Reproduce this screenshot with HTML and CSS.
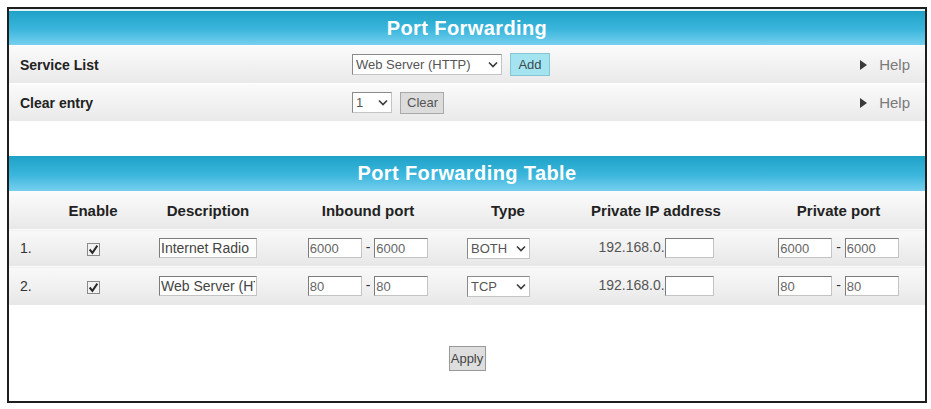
FILE: index.html
```html
<!DOCTYPE html>
<html lang="en">
<head>
    <meta charset="UTF-8">
    <title>Port Forwarding</title>
    <link rel="stylesheet" href="styles.css">
</head>
<body>
    <div class="panel">
        <div class="bar bar-top">Port Forwarding</div>

        <div class="opt-row">
            <div class="opt-label">Service List</div>
            <div class="opt-ctrl">
                <span class="sel-wrap sel-service">
                    <select><option>Web Server (HTTP)</option></select>
                    <svg class="chev" viewBox="0 0 10 6"><path d="M1 1l4 4 4-4"/></svg>
                </span>
                <button class="btn btn-add">Add</button>
            </div>
            <a class="help" href="#"><span class="tri"></span>Help</a>
        </div>

        <div class="opt-row">
            <div class="opt-label">Clear entry</div>
            <div class="opt-ctrl">
                <span class="sel-wrap sel-entry">
                    <select><option>1</option><option>2</option></select>
                    <svg class="chev" viewBox="0 0 10 6"><path d="M1 1l4 4 4-4"/></svg>
                </span>
                <button class="btn btn-clear">Clear</button>
            </div>
            <a class="help" href="#"><span class="tri"></span>Help</a>
        </div>

        <div class="spacer"></div>

        <div class="bar">Port Forwarding Table</div>

        <table class="pf-table">
            <colgroup>
                <col style="width:41px">
                <col style="width:86px">
                <col style="width:144px">
                <col style="width:176px">
                <col style="width:104px">
                <col style="width:192px">
                <col style="width:173px">
            </colgroup>
            <thead>
                <tr>
                    <th></th>
                    <th>Enable</th>
                    <th>Description</th>
                    <th>Inbound port</th>
                    <th>Type</th>
                    <th>Private IP address</th>
                    <th>Private port</th>
                </tr>
            </thead>
            <tbody>
                <tr class="row-1">
                    <td class="num">1.</td>
                    <td class="center"><span class="check"><svg viewBox="0 0 10 10"><path d="M1.5 5l2.5 3 4.5-6.5"/></svg></span></td>
                    <td class="center"><input class="txt desc" type="text" value="Internet Radio"></td>
                    <td class="center"><input class="txt port" type="text" value="6000"> - <input class="txt port" type="text" value="6000"></td>
                    <td class="type">
                        <span class="sel-wrap sel-type">
                            <select><option>BOTH</option><option>TCP</option><option>UDP</option></select>
                            <svg class="chev" viewBox="0 0 10 6"><path d="M1 1l4 4 4-4"/></svg>
                        </span>
                    </td>
                    <td class="center ip">192.168.0.<input class="txt host" type="text" value=""></td>
                    <td class="center"><input class="txt port" type="text" value="6000"> - <input class="txt port" type="text" value="6000"></td>
                </tr>
                <tr class="row-2">
                    <td class="num">2.</td>
                    <td class="center"><span class="check"><svg viewBox="0 0 10 10"><path d="M1.5 5l2.5 3 4.5-6.5"/></svg></span></td>
                    <td class="center"><input class="txt desc" type="text" value="Web Server (HTTP)"></td>
                    <td class="center"><input class="txt port" type="text" value="80"> - <input class="txt port" type="text" value="80"></td>
                    <td class="type">
                        <span class="sel-wrap sel-type">
                            <select><option>TCP</option><option>BOTH</option><option>UDP</option></select>
                            <svg class="chev" viewBox="0 0 10 6"><path d="M1 1l4 4 4-4"/></svg>
                        </span>
                    </td>
                    <td class="center ip">192.168.0.<input class="txt host" type="text" value=""></td>
                    <td class="center"><input class="txt port" type="text" value="80"> - <input class="txt port" type="text" value="80"></td>
                </tr>
            </tbody>
        </table>

        <div class="apply-row">
            <button class="btn btn-apply">Apply</button>
        </div>
    </div>
</body>
</html>
```

FILE: styles.css
```css
body {
    margin: 0;
    padding: 0;
    font-family: "Liberation Sans", Arial, sans-serif;
    font-size: 14px;
    color: #333;
    background-color: #fff;
}

.panel {
    margin: 7px 0 0 7px;
    width: 916px;
    height: 392px;
    border: 2px solid #1e1e1e;
    background-color: #fff;
}

.bar {
    height: 35px;
    line-height: 35px;
    text-align: center;
    color: #fff;
    font-size: 20px;
    font-weight: bold;
    letter-spacing: 0.4px;
    background: linear-gradient(#1fa2c8, #3cb6dc 55%, #76d0ef);
}

.bar-top {
    height: 34px;
    line-height: 34px;
    border-top: 2px solid #e4f1f5;
}

.opt-row {
    display: flex;
    align-items: center;
    height: 37px;
    padding: 0 15px 0 11px;
    background: linear-gradient(#fbfbfb, #e9e9e9);
    border-top: 1px solid #fff;
}

.opt-label {
    flex: 0 0 332px;
    font-weight: bold;
    color: #222;
}

.opt-ctrl {
    display: flex;
    align-items: center;
    gap: 8px;
}

.help {
    margin-left: auto;
    display: flex;
    align-items: center;
    color: #7a7a7a;
    font-size: 15px;
    text-decoration: none;
}

.tri {
    width: 0;
    height: 0;
    margin-right: 12px;
    border-top: 5px solid transparent;
    border-bottom: 5px solid transparent;
    border-left: 7px solid #3a3a3a;
}

.spacer {
    height: 35px;
}

/* selects with a drawn chevron */
.sel-wrap {
    position: relative;
    display: inline-block;
    vertical-align: middle;
}

.sel-wrap select {
    appearance: none;
    -webkit-appearance: none;
    display: block;
    height: 21px;
    margin: 0;
    padding: 0 0 0 3px;
    border: 1px solid;
    border-color: #8a8a8a #c4c4c4 #c4c4c4 #8a8a8a;
    border-radius: 0;
    background-color: #fff;
    font-family: "Liberation Sans", Arial, sans-serif;
    font-size: 13px;
    color: #555;
}

.chev {
    position: absolute;
    right: 4px;
    top: 7px;
    width: 10px;
    height: 7px;
    fill: none;
    stroke: #3a3a3a;
    stroke-width: 1.6;
    pointer-events: none;
}

.sel-service select {
    width: 150px;
}

.sel-entry select {
    width: 40px;
}

.sel-type select {
    width: 63px;
}

.btn {
    height: 22px;
    padding: 0 6px;
    border: 1px solid #a9a9a9;
    border-radius: 0;
    font-family: "Liberation Sans", Arial, sans-serif;
    font-size: 13px;
    color: #555;
    background-color: #dcdcdc;
}

.btn-add {
    width: 40px;
    height: 23px;
    background-color: #a4e4f1;
    border-color: #86c6d2;
    color: #3c4a50;
}

.btn-clear {
    width: 44px;
}

.btn-apply {
    width: 37px;
    height: 25px;
    padding: 0;
    color: #444;
    border-color: #999;
    background-color: #dedede;
}

/* table */
.pf-table {
    width: 916px;
    border-collapse: collapse;
    table-layout: fixed;
}

.pf-table th {
    height: 38px;
    padding: 0;
    font-size: 15px;
    font-weight: bold;
    color: #222;
    text-align: center;
    background: linear-gradient(#fcfcfc, #e8e8e8);
}

.pf-table td {
    padding: 0;
    background: linear-gradient(#f9f9f9, #e7e7e7);
    border-top: 1px solid #fbfbfb;
    white-space: nowrap;
}

.row-1 td {
    height: 36px;
}

.row-2 td {
    height: 38px;
}

.num {
    padding-left: 11px !important;
    color: #333;
}

.center {
    text-align: center;
}

.type {
    padding-left: 11px !important;
}

.ip {
    color: #555;
    font-size: 14px;
}

.txt {
    box-sizing: border-box;
    height: 20px;
    margin: 0;
    padding: 0 2px;
    border: 1px solid;
    border-color: #7c7c7c #c4c4c4 #c4c4c4 #7c7c7c;
    font-family: "Liberation Sans", Arial, sans-serif;
    font-size: 13px;
    color: #666;
    background-color: #fff;
    vertical-align: middle;
}

.desc {
    width: 98px;
    padding: 0 1px;
    font-size: 14px;
    color: #444;
}

.port {
    width: 54px;
    padding: 0 1px;
}

.host {
    width: 49px;
}

.check {
    display: inline-block;
    width: 11px;
    height: 11px;
    border: 1px solid #8a8a8a;
    background-color: #f2f2f2;
    vertical-align: middle;
}

.check svg {
    display: block;
    width: 11px;
    height: 11px;
    fill: none;
    stroke: #2a2a2a;
    stroke-width: 1.8;
}

.apply-row {
    padding-top: 41px;
    text-align: center;
}
```
